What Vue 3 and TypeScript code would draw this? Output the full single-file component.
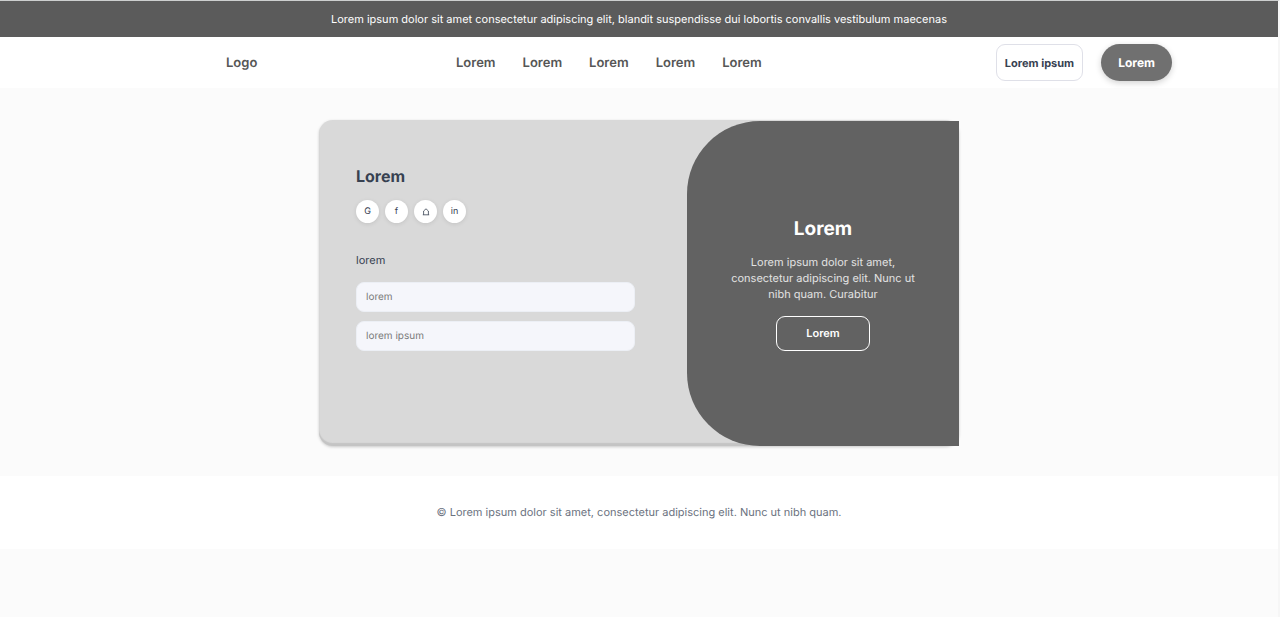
<script setup lang="ts">
import { ref } from 'vue'

interface Social {
  label: string
  glyph: string
}

const navItems: string[] = ['Lorem', 'Lorem', 'Lorem', 'Lorem', 'Lorem']
const socials: Social[] = [
  { label: 'Google', glyph: 'G' },
  { label: 'Facebook', glyph: 'f' },
  { label: 'Home', glyph: '' },
  { label: 'LinkedIn', glyph: 'in' },
]
const first = ref('')
const second = ref('')
</script>

<template>
  <div class="page">
    <p class="banner">
      Lorem ipsum dolor sit amet consectetur adipiscing elit, blandit suspendisse dui lobortis convallis vestibulum maecenas
    </p>

    <header class="header">
      <a class="logo" href="#">Logo</a>
      <nav class="nav">
        <a v-for="(item, i) in navItems" :key="i" href="#">{{ item }}</a>
      </nav>
      <div class="actions">
        <button class="btn-outline" type="button">Lorem ipsum</button>
        <button class="btn-pill" type="button">Lorem</button>
      </div>
    </header>

    <main class="main">
      <section class="card">
        <form class="form" @submit.prevent>
          <h1 class="title">Lorem</h1>
          <div class="socials">
            <a v-for="s in socials" :key="s.label" class="social" href="#" :aria-label="s.label">
              <template v-if="s.glyph">{{ s.glyph }}</template>
              <svg v-else width="8" height="8" viewBox="0 0 8 8" fill="none" stroke="currentColor" stroke-width="0.8" stroke-linejoin="round">
                <path d="M1.6 6.8V3L4 0.8L6.4 3V6.8 M0.8 6.8H7.2" />
              </svg>
            </a>
          </div>
          <p class="hint">lorem</p>
          <input v-model="first" class="field" type="text" placeholder="lorem" aria-label="lorem" />
          <input v-model="second" class="field" type="text" placeholder="lorem ipsum" aria-label="lorem ipsum" />
        </form>

        <aside class="panel">
          <h2 class="panel-title">Lorem</h2>
          <p class="panel-text">Lorem ipsum dolor sit amet, consectetur adipiscing elit. Nunc ut nibh quam. Curabitur</p>
          <button class="panel-btn" type="button">Lorem</button>
        </aside>
      </section>
    </main>

    <footer class="footer">© Lorem ipsum dolor sit amet, consectetur adipiscing elit. Nunc ut nibh quam.</footer>
  </div>
</template>

<style>
body {
  background: #fbfbfb;
}
</style>

<style scoped>
.page {
  box-sizing: border-box;
  min-height: 100vh;
  border-top: 1px solid #cdcfcf;
  border-right: 2px solid #f6f6f6;
  background: #fbfbfb;
  font-family: Inter, 'Liberation Sans', sans-serif;
  font-size: 11px;
  text-rendering: geometricPrecision;
  color: #374151;
}

.page * {
  box-sizing: border-box;
}

a {
  color: inherit;
  text-decoration: none;
}

button,
input {
  font-family: inherit;
  text-rendering: inherit;
}

.banner {
  margin: 0;
  padding: 10px 16px;
  background: #5b5b5b;
  color: #fff;
  font-weight: 400;
  line-height: 16px;
  text-align: center;
}

.header {
  display: grid;
  grid-template-columns: 230px 1fr auto;
  align-items: center;
  padding: 7px 106px 7px 226px;
  background: #fff;
}

.logo,
.nav {
  color: #565656;
  font-size: 13px;
  font-weight: 600;
  line-height: 16px;
}

.nav {
  display: flex;
  gap: 27px;
}

.actions {
  display: flex;
  gap: 18px;
}

.btn-outline {
  height: 37px;
  padding: 0 8px;
  border: 1px solid #dfe0e8;
  border-radius: 9px;
  background: #fff;
  color: #374151;
  font-size: 11px;
  font-weight: 700;
}

.btn-pill {
  height: 37px;
  padding: 0 17px;
  border: 0;
  border-radius: 19px;
  background: #707070;
  box-shadow: 0 2px 6px rgba(0, 0, 0, 0.18);
  color: #fff;
  font-size: 12px;
  font-weight: 700;
}

.main {
  padding: 32px 16px 30px;
}

.card {
  display: flex;
  max-width: 640px;
  min-height: 326px;
  margin: 0 auto;
  padding-top: 1px;
  border-radius: 14px;
  background: #d9d9d9;
  box-shadow: 0 1px 3px rgba(0, 0, 0, 0.2), inset 0 -3px 1px #c4c4c4;
}

.form {
  flex: 1;
  display: flex;
  flex-direction: column;
  padding: 43px 52px 40px 37px;
}

.title {
  margin: 0;
  font-size: 16px;
  font-weight: 700;
  line-height: 24px;
}

.socials {
  display: flex;
  gap: 6px;
  margin: 12px 0 29px;
}

.social {
  display: flex;
  align-items: center;
  justify-content: center;
  width: 23px;
  height: 23px;
  border-radius: 50%;
  background: #fff;
  box-shadow: 0 1px 4px rgba(0, 0, 0, 0.1);
  font-size: 9px;
  line-height: 12px;
}

.hint {
  margin: 0 0 14px;
  line-height: 16px;
}

.field {
  width: 100%;
  height: 30px;
  margin: 0 0 9px;
  padding: 0 9px;
  border: 1px solid #eceff5;
  border-radius: 8px;
  background: #f5f6fb;
  color: #374151;
  font-size: 10px;
}

.field::placeholder {
  color: #7a7a7a;
  opacity: 1;
}

.panel {
  display: flex;
  flex-direction: column;
  align-items: center;
  justify-content: center;
  width: 272px;
  padding: 0 44px;
  border-radius: 73px 0 0 73px;
  background: #626262;
  color: #fff;
  text-align: center;
}

.panel-title {
  margin: 0;
  font-size: 19px;
  font-weight: 700;
  line-height: 24px;
}

.panel-text {
  margin: 13px 0 14px;
  color: #e2e2e2;
  font-size: 11px;
  line-height: 16px;
}

.panel-btn {
  height: 35px;
  padding: 0 29px;
  border: 1px solid #fff;
  border-radius: 9px;
  background: transparent;
  color: #fff;
  font-size: 11px;
  font-weight: 600;
}

.footer {
  padding: 28px 16px 29px;
  background: #fff;
  color: #6b7280;
  line-height: 16px;
  text-align: center;
}
</style>
